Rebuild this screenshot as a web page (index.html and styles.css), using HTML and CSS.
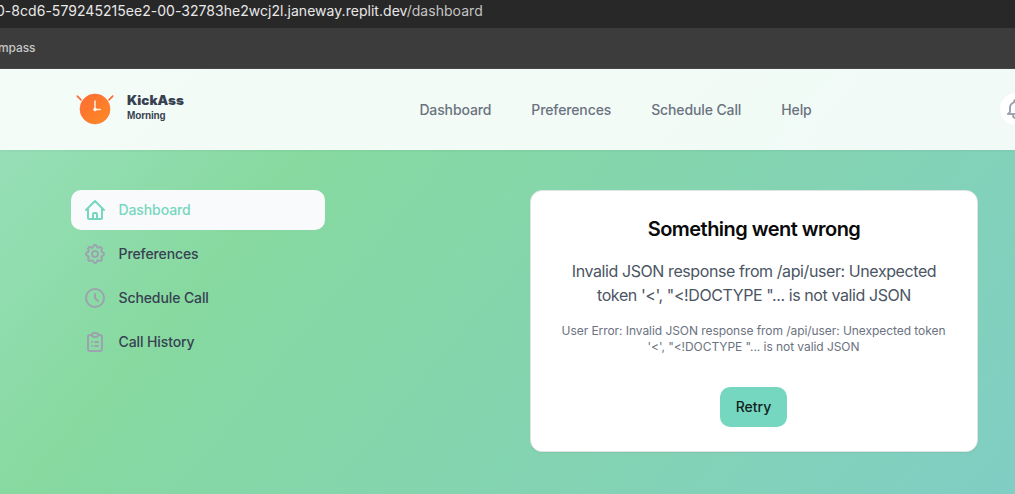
FILE: index.html
```html
<!DOCTYPE html>
<html lang="en">
<head>
<meta charset="utf-8">
<title>KickAss Morning</title>
<link rel="stylesheet" href="styles.css">
</head>
<body>
<div class="address-bar"><span class="address">0-8cd6-579245215ee2-00-32783he2wcj2l.janeway.replit.dev<span class="address-path">/dashboard</span></span></div>
<div class="bookmarks"><span class="bookmark">mpass</span></div>
<div class="page">
  <header class="header">
    <div class="brand">
      <svg class="logo" viewBox="0 0 40 40">
        <defs><linearGradient id="face" x1="0" y1="0" x2="1" y2="1"><stop offset="0" stop-color="#ff6b35"/><stop offset="1" stop-color="#fb8c22"/></linearGradient></defs>
        <circle cx="20" cy="22" r="15" fill="url(#face)" stroke="#ff6b35" stroke-width=".6"/>
        <path d="M2.3 9.1 6 12.8M37.7 9.1 34 12.8" stroke="#ff6b35" stroke-width="1.7" stroke-linecap="round"/>
        <path d="M20 22v-8M20 22.4h5.2" stroke="#fff" stroke-opacity=".85" stroke-width="1.5" stroke-linecap="round"/>
        <circle cx="20" cy="22.5" r="1.7" fill="#fff"/>
      </svg>
      <div class="wordmark"><span class="brand-name">KickAss</span><span class="brand-sub">Morning</span></div>
    </div>
    <nav class="top-nav"><a>Dashboard</a><a>Preferences</a><a>Schedule Call</a><a>Help</a></nav>
    <button class="bell" aria-label="Notifications"><svg class="icon" viewBox="0 0 24 24"><path d="M15 17h5l-1.405-1.405A2.032 2.032 0 0118 14.158V11a6.002 6.002 0 00-4-5.659V5a2 2 0 10-4 0v.341C7.67 6.165 6 8.388 6 11v3.159c0 .538-.214 1.055-.595 1.436L4 17h5m6 0v1a3 3 0 11-6 0v-1m6 0H9"/></svg></button>
  </header>
  <div class="content">
    <aside class="sidebar">
      <a class="side-link active"><svg class="icon" viewBox="0 0 24 24"><path d="M3 12l2-2m0 0l7-7 7 7M5 10v10a1 1 0 001 1h3m10-11l2 2m-2-2v10a1 1 0 01-1 1h-3m-6 0a1 1 0 001-1v-4a1 1 0 011-1h2a1 1 0 011 1v4a1 1 0 001 1m-6 0h6"/></svg><span class="side-label">Dashboard</span></a>
      <a class="side-link"><svg class="icon" viewBox="0 0 24 24"><path d="M10.325 4.317c.426-1.756 2.924-1.756 3.35 0a1.724 1.724 0 002.573 1.066c1.543-.94 3.31.826 2.37 2.37a1.724 1.724 0 001.065 2.572c1.756.426 1.756 2.924 0 3.35a1.724 1.724 0 00-1.066 2.573c.94 1.543-.826 3.31-2.37 2.37a1.724 1.724 0 00-2.572 1.065c-.426 1.756-2.924 1.756-3.35 0a1.724 1.724 0 00-2.573-1.066c-1.543.94-3.31-.826-2.37-2.37a1.724 1.724 0 00-1.065-2.572c-1.756-.426-1.756-2.924 0-3.35a1.724 1.724 0 001.066-2.573c-.94-1.543.826-3.31 2.37-2.37.996.608 2.296.07 2.572-1.065z"/><circle cx="12" cy="12" r="3"/></svg><span class="side-label">Preferences</span></a>
      <a class="side-link"><svg class="icon" viewBox="0 0 24 24"><path d="M12 8v4l3 3m6-3a9 9 0 11-18 0 9 9 0 0118 0z"/></svg><span class="side-label">Schedule Call</span></a>
      <a class="side-link"><svg class="icon" viewBox="0 0 24 24"><path d="M9 5H7a2 2 0 00-2 2v12a2 2 0 002 2h10a2 2 0 002-2V7a2 2 0 00-2-2h-2M9 5a2 2 0 002 2h2a2 2 0 002-2M9 5a2 2 0 012-2h2a2 2 0 012 2m-3 7h3m-3 4h3m-6-4h.01M9 16h.01"/></svg><span class="side-label">Call History</span></a>
    </aside>
    <main class="card">
      <h1 class="title">Something went wrong</h1>
      <p class="message">Invalid JSON response from /api/user: Unexpected<br>token '&lt;', "&lt;!DOCTYPE "... is not valid JSON</p>
      <p class="detail">User Error: Invalid JSON response from /api/user: Unexpected token<br>'&lt;', "&lt;!DOCTYPE "... is not valid JSON</p>
      <button class="retry">Retry</button>
    </main>
  </div>
</div>
</body>
</html>
```
FILE: styles.css
```css
* { box-sizing: border-box; }
body { margin: 0; width: 1015px; height: 494px; overflow: hidden; font-family: Inter, "Liberation Sans", sans-serif; }
.address-bar { height: 28px; background: #282828; color: #e8e8e8; font-size: 14px; line-height: 22px; letter-spacing: .035px; white-space: nowrap; overflow: hidden; }
.address { display: inline-block; margin-left: -4px; }
.address-path { color: #c4c4c4; }
.bookmarks { height: 41px; background: #3c3c3c; border-bottom: 1px solid #464646; color: #c7c7c7; font-size: 12px; font-weight: 500; line-height: 40px; letter-spacing: -.1px; overflow: hidden; }
.bookmark { display: inline-block; margin-left: -2px; }
.page { height: 425px; background: linear-gradient(130deg, #9ae0bd 0, #87d9a0 288px, #80cec4 1051px); }
.header { display: flex; align-items: center; height: 81px; padding-left: 75px; background: rgba(246,254,251,.9); box-shadow: 0 1px 2px rgba(0,0,0,.05); overflow: hidden; }
.header { background: rgba(255,255,255,.89); }
.brand { display: flex; gap: 12px; width: 344px; flex: none; }
.logo { width: 40px; height: 40px; margin-top: -5px; fill: none; }
.wordmark { display: flex; flex-direction: column; font-family: "Liberation Sans", Arial, sans-serif; font-weight: 700; color: #374151; }
.brand-name { font-family: Inter, sans-serif; font-weight: 900; font-size: 12.5px; line-height: 17px; transform: scaleX(1.08); transform-origin: left; }
.brand-sub { font-size: 10px; line-height: 14px; letter-spacing: -.12px; }
.top-nav { display: flex; gap: 40px; width: 581px; flex: none; padding-left: .4px; font-size: 14px; font-weight: 500; color: #6b7280; line-height: 20px; letter-spacing: -.12px; white-space: nowrap; }
.bell { display: flex; flex: none; width: 32px; height: 32px; margin-top: -1px; padding: 4px; border: 0; border-radius: 50%; background: #fff; color: #9ca3af; }
.icon { width: 24px; height: 24px; flex: none; fill: none; stroke: currentColor; stroke-width: 2; stroke-linecap: round; stroke-linejoin: round; }
.content { display: flex; align-items: flex-start; gap: 205px; padding: 40px 37px 0 71px; }
.sidebar { display: flex; flex-direction: column; gap: 4px; width: 254px; }
.side-link { display: flex; align-items: center; height: 40px; padding: 0 12px; gap: 11.5px; border-radius: 10px; color: #374151; font-size: 14px; font-weight: 500; line-height: 20px; letter-spacing: -.1px; }
.side-label { padding-bottom: 1px; }
.side-link .icon { color: #9ca3af; }
.side-link.active, .side-link.active .icon { color: #76d7c0; }
.side-link.active { background: #f9fafb; }
.card { display: flex; flex-direction: column; align-items: center; width: 448px; height: 262px; padding: 24px; border: 1px solid #e0e4e3; border-radius: 12px; background: #fff; box-shadow: 0 1px 2px rgba(0,0,0,.05); text-align: center; white-space: nowrap; }
.title { margin: 0; font-size: 20px; line-height: 28px; font-weight: 600; letter-spacing: -.53px; color: #0a0a0a; }
.message { margin: 16px 0 0; font-size: 16px; line-height: 24px; letter-spacing: -.41px; color: #4b5563; }
.detail { margin: 16px 1px 0 0; font-size: 12px; line-height: 16px; letter-spacing: -.06px; color: #6b7280; }
.retry { margin: 32px 1px 0 0; width: 67px; height: 40px; padding: 0; border: 0; border-radius: 10px; background: #76d7c0; color: #10231f; font: 500 14px/20px Inter, sans-serif; }
```
